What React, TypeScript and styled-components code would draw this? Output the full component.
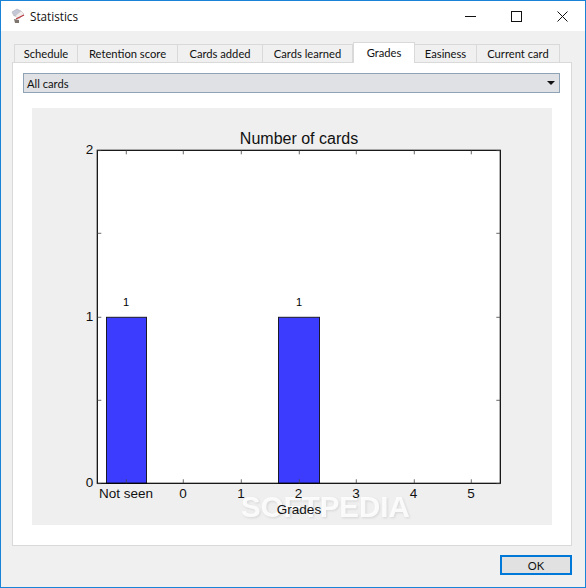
import React from "react";
import styled, { createGlobalStyle } from "styled-components";

const Global = createGlobalStyle`
  html, body { margin: 0; padding: 0; background: #f0f0f0; }
  #root { width: 586px; height: 588px; overflow: hidden; }
`;

const Win = styled.div`
  box-sizing: border-box;
  width: 586px;
  height: 588px;
  border: 1px solid #1883d7;
  background: #f0f0f0;
  display: flex;
  flex-direction: column;
  font-family: "Lato", "Open Sans", sans-serif;
  font-size: 11.2px;
  color: #111;
`;

const TitleBar = styled.div`
  height: 30px;
  flex: none;
  background: #fff;
  display: flex;
  align-items: center;
  padding-left: 10px;
`;

const AppIcon = styled.svg`
  width: 14px;
  height: 16px;
  flex: none;
  margin-right: 5px;
`;

const Title = styled.span`
  font-family: "Open Sans", sans-serif;
  font-size: 11.7px;
  flex: 1;
  color: #111;
`;

const Controls = styled.div`
  display: flex;
  height: 100%;
`;

const Control = styled.div`
  width: 46px;
  height: 100%;
  display: flex;
  align-items: center;
  justify-content: center;
  svg { width: 11px; height: 11px; display: block; }
`;

const Body = styled.div`
  flex: 1;
  display: flex;
  flex-direction: column;
  padding: 11px 13px 0 11px;
  min-height: 0;
`;

const TabRow = styled.div`
  display: flex;
  align-items: flex-end;
  height: 21px;
  padding-left: 2px;
  margin-bottom: -1px;
  position: relative;
  z-index: 1;
`;

const Tab = styled.div<{ $w: number; $active?: boolean }>`
  box-sizing: border-box;
  width: ${(p) => p.$w}px;
  height: ${(p) => (p.$active ? 21 : 19)}px;
  display: flex;
  align-items: center;
  justify-content: center;
  border: 1px solid #d9d9d9;
  border-left-width: ${(p) => (p.$active ? 1 : 0)}px;
  border-bottom: ${(p) => (p.$active ? "none" : "1px solid #d9d9d9")};
  background: ${(p) => (p.$active ? "#fff" : "#f0f0f0")};
  padding-bottom: ${(p) => (p.$active ? 2 : 0)}px;
  &:first-child { border-left-width: 1px; }
`;

const Pane = styled.div`
  box-sizing: border-box;
  width: 560px;
  height: 484px;
  background: #fff;
  border: 1px solid #d9d9d9;
  padding: 10px 10px 0 10px;
`;

const Combo = styled.div`
  box-sizing: border-box;
  width: 537px;
  height: 20px;
  background: #dfe1e4;
  border: 1px solid #8ea3b5;
  display: flex;
  align-items: center;
  justify-content: space-between;
  padding: 0 4px 0 3px;
`;

const Caret = styled.span`
  width: 0;
  height: 0;
  border-left: 4px solid transparent;
  border-right: 4px solid transparent;
  border-top: 4px solid #111;
`;

const ChartPanel = styled.div`
  width: 520px;
  height: 417px;
  margin: 15px 0 0 9px;
  background: #efefef;
`;

const Chart = styled.svg`
  display: block;
  width: 520px;
  height: 417px;
  font-family: "Liberation Sans", Arial, sans-serif;
`;

const Watermark = styled.text`
  font-size: 29.5px;
  font-weight: 700;
  fill: #fff;
  fill-opacity: 0.85;
  filter: drop-shadow(1px 1px 1px rgba(0, 0, 0, 0.12));
`;

const Footer = styled.div`
  display: flex;
  justify-content: flex-end;
  padding: 9px 0 0 0;
`;

const OkButton = styled.button`
  box-sizing: border-box;
  width: 72px;
  height: 20px;
  background: #e1e1e1;
  border: 2px solid #0078d7;
  padding: 0;
  font: inherit;
  color: #111;
`;

const tabs = [
  { label: "Schedule", w: 64 },
  { label: "Retention score", w: 100 },
  { label: "Cards added", w: 85 },
  { label: "Cards learned", w: 90 },
  { label: "Grades", w: 62, active: true },
  { label: "Easiness", w: 62 },
  { label: "Current card", w: 83 },
];

// Chart geometry, in panel coordinates (panel starts at page x=32, y=108)
const L = 65.3, R = 468.3, T = 42.3, B = 375.3;
const xTicks = [
  { x: 94.3, label: "Not seen", lx: 94 },
  { x: 151.3, label: "0", lx: 151 },
  { x: 209.3, label: "1", lx: 209 },
  { x: 267.3, label: "2", lx: 266.5 },
  { x: 324.3, label: "3", lx: 324 },
  { x: 382.3, label: "4", lx: 381.5 },
  { x: 439.3, label: "5", lx: 439 },
];
const yTicks = [T, 125, 209, 292, B];
const yLabels = [
  { y: T, label: "2" },
  { y: 209, label: "1" },
  { y: B, label: "0" },
];
const bars = [
  { x: 74.5, w: 40, cx: 94 },
  { x: 246.5, w: 41, cx: 267 },
];

export default function App() {
  return (
    <Win>
      <Global />
      <TitleBar>
        <AppIcon viewBox="0 0 14 16">
          <path d="M1 4 L6 1 L10 3 L8 8 L3 8 Z" fill="#c4c8d6" stroke="#a5a7b3" strokeWidth="0.5" />
          <path d="M4 8 L10 3 L13 6 L8 11 Z" fill="#f0eeee" stroke="#bdb8b8" strokeWidth="0.5" />
          <path d="M5 11 L13 7" stroke="#b8343a" strokeWidth="1.2" />
          <path d="M3 11 L8 12 L8 15 L4 15 Z" fill="#7d756e" />
        </AppIcon>
        <Title>Statistics</Title>
        <Controls>
          <Control>
            <svg viewBox="0 0 11 11"><path d="M0 5.5H11" stroke="#111" strokeWidth="1" /></svg>
          </Control>
          <Control>
            <svg viewBox="0 0 11 11"><rect x="0.5" y="0.5" width="10" height="10" fill="none" stroke="#111" strokeWidth="1" /></svg>
          </Control>
          <Control>
            <svg viewBox="0 0 11 11"><path d="M0.5 0.5L10.5 10.5M10.5 0.5L0.5 10.5" stroke="#111" strokeWidth="1" /></svg>
          </Control>
        </Controls>
      </TitleBar>
      <Body>
        <TabRow>
          {tabs.map((t) => (
            <Tab key={t.label} $w={t.w} $active={t.active}>{t.label}</Tab>
          ))}
        </TabRow>
        <Pane>
          <Combo>
            All cards
            <Caret />
          </Combo>
          <ChartPanel>
            <Chart viewBox="0 0 520 417">
              <rect x={L} y={T} width={R - L} height={B - T} fill="#fff" />
              {bars.map((b) => (
                <g key={b.x}>
                  <rect x={b.x} y={209.3} width={b.w} height={B - 209.3} fill="#3c3cff" stroke="#1a1a2a" strokeWidth="1" />
                  <text x={b.cx} y={198} fontSize="11" textAnchor="middle" fill="#000">1</text>
                </g>
              ))}
              <rect x={L} y={T} width={R - L} height={B - T} fill="none" stroke="#000" strokeWidth="1.2" />
              <Watermark x={209} y={408.5}>SOFTPEDIA</Watermark>
              {xTicks.map((t) => (
                <g key={t.label}>
                  <path d={`M${t.x} ${T}v4M${t.x} ${B}v-4`} stroke="#444" strokeWidth="0.8" />
                  <text x={t.lx} y={389.5} fontSize="13.5" textAnchor="middle" fill="#111">{t.label}</text>
                </g>
              ))}
              {yTicks.map((y) => (
                <path key={y} d={`M${L} ${y + 0.3}h4M${R} ${y + 0.3}h-4`} stroke="#444" strokeWidth="0.8" />
              ))}
              {yLabels.map((t) => (
                <text key={t.label} x={L - 4} y={t.y + 3.5} fontSize="13.5" textAnchor="end" fill="#111">{t.label}</text>
              ))}
              <text x={267} y={36} fontSize="16" textAnchor="middle" fill="#111">Number of cards</text>
              <text x={267} y={406} fontSize="13.5" textAnchor="middle" fill="#111">Grades</text>
            </Chart>
          </ChartPanel>
        </Pane>
        <Footer>
          <OkButton>OK</OkButton>
        </Footer>
      </Body>
    </Win>
  );
}
